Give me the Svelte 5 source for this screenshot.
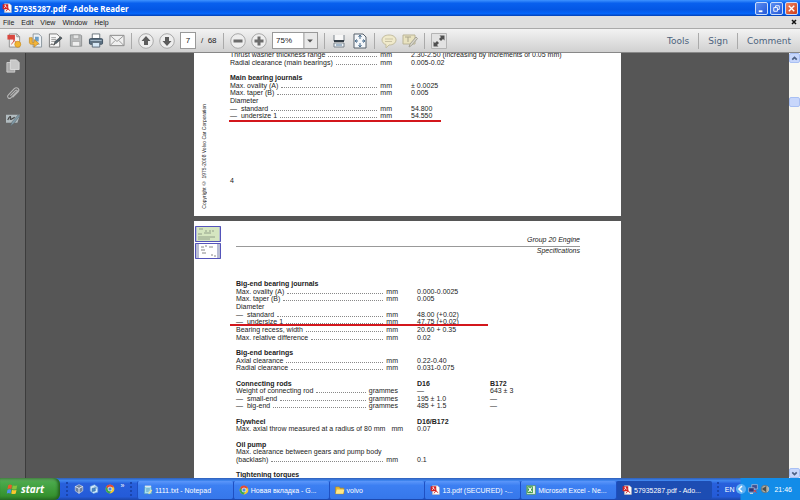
<script>
  const menus = ['File', 'Edit', 'View', 'Window', 'Help'];
  const panels = ['Tools', 'Sign', 'Comment'];

  let pageNumber = $state('7');
  let zoom = $state('75%');

  const mainJournals = [
    { label: 'Thrust washer thickness range', unit: 'mm', value: '2.30-2.50 (increasing by increments of 0.05 mm)' },
    { label: 'Radial clearance (main bearings)', unit: 'mm', value: '0.005-0.02' },
    {},
    { label: 'Main bearing journals', head: true },
    { label: 'Max. ovality (A)', unit: 'mm', value: '± 0.0025' },
    { label: 'Max. taper (B)', unit: 'mm', value: '0.005' },
    { label: 'Diameter' },
    { label: '—  standard', unit: 'mm', value: '54.800' },
    { label: '—  undersize 1', unit: 'mm', value: '54.550', mark: true },
  ];

  const engineSpecs = [
    { label: 'Big-end bearing journals', head: true },
    { label: 'Max. ovality (A)', unit: 'mm', value: '0.000-0.0025' },
    { label: 'Max. taper (B)', unit: 'mm', value: '0.005' },
    { label: 'Diameter' },
    { label: '—  standard', unit: 'mm', value: '48.00 (+0.02)' },
    { label: '—  undersize 1', unit: 'mm', value: '47.75 (+0.02)', mark: true },
    { label: 'Bearing recess, width', unit: 'mm', value: '20.60 + 0.35' },
    { label: 'Max. relative difference', unit: 'mm', value: '0.02' },
    {},
    { label: 'Big-end bearings', head: true },
    { label: 'Axial clearance', unit: 'mm', value: '0.22-0.40' },
    { label: 'Radial clearance', unit: 'mm', value: '0.031-0.075' },
    {},
    { label: 'Connecting rods', head: true, value: 'D16', other: 'B172' },
    { label: 'Weight of connecting rod', unit: 'grammes', value: '—', other: '643 ± 3' },
    { label: '—  small-end', unit: 'grammes', value: '195 ± 1.0', other: '—' },
    { label: '—  big-end', unit: 'grammes', value: '485 + 1.5', other: '—' },
    {},
    { label: 'Flywheel', head: true, value: 'D16/B172' },
    { label: 'Max. axial throw measured at a radius of 80 mm', unit: 'mm', value: '0.07' },
    {},
    { label: 'Oil pump', head: true },
    { label: 'Max. clearance between gears and pump body' },
    { label: '(backlash)', unit: 'mm', value: '0.1' },
    {},
    { label: 'Tightening torques', head: true },
  ];

  const tasks = [
    { icon: 'notepad', title: '1111.txt - Notepad' },
    { icon: 'chrome', title: 'Новая вкладка - G...' },
    { icon: 'folder', title: 'volvo' },
    { icon: 'pdf', title: '13.pdf (SECURED) -...' },
    { icon: 'excel', title: 'Microsoft Excel - Ne...' },
    { icon: 'pdf', title: '57935287.pdf - Ado...', active: true },
  ];
</script>

{#snippet icon(name)}
  <svg class="icon" viewBox="0 0 16 16" aria-hidden="true">
    {#if name === 'pdf'}
      <path d="M4 1h8l3 3v11H4z" fill="#fff" stroke="#b9b9b9" />
      <path d="M1 2h9v8H1z" fill="#d3201f" />
      <path d="M3 8c3-1 3-5 2-5s0 4 4 4" fill="none" stroke="#fff" stroke-width="1.2" />
      <path d="M6 13c3-1 4-5 3-6s0 4 4 5" fill="none" stroke="#d3201f" stroke-width="1.5" />
    {:else if name === 'create'}
      <path d="M3 1h8l3 3v11H3z" fill="#f4f4f4" stroke="#8f8f8f" />
      <path d="M11 1v3h3" fill="none" stroke="#8f8f8f" />
      <path d="M1 2h8v5H1z" fill="#d9473f" />
      <path d="M5 12c3-2 4-6 3-6s0 4 4 4" fill="none" stroke="#d9473f" />
      <circle cx="12" cy="12" r="3.2" fill="#f2b632" stroke="#c98a1c" stroke-width=".7" />
    {:else if name === 'convert'}
      <path d="M6 1h6l3 3v11H6z" fill="#edf1f5" stroke="#8a949d" />
      <path d="M8 4h4v5H8z" fill="#6e9fc7" />
      <path d="M9 12h4" stroke="#93a6b5" />
      <path d="M2 5v5c0 1 1 2 2 2h3v3l5-4-5-4v3H5V5z" fill="#f2b53c" stroke="#bf831c" stroke-width=".7" />
    {:else if name === 'sign'}
      <path d="M2 1h8l3 3v11H2z" fill="#f7f7f7" stroke="#777" />
      <path d="M4 5h5M4 7h5M4 9h4" stroke="#999" />
      <path d="M3 13c2-3 3 1 5-1" fill="none" stroke="#333" />
      <path d="m7 12 1-3 6-5 1.5 1.5-6 5.5z" fill="#53626c" stroke="#333" stroke-width=".6" />
    {:else if name === 'save'}
      <path d="M2 2h11l1 1v11H2z" fill="#b9bbbc" stroke="#8f9293" />
      <path d="M5 2h6v4H5z" fill="#e4e5e5" stroke="#999" stroke-width=".7" />
      <path d="M4 9h8v5H4z" fill="#efefef" stroke="#999" stroke-width=".7" />
    {:else if name === 'print'}
      <path d="M4 1h8v5H4z" fill="#fff" stroke="#68727a" />
      <rect x="1" y="6" width="14" height="6" rx="1" fill="#5e7385" stroke="#3f5060" />
      <path d="M2 8h12" stroke="#aabdcc" />
      <path d="M4 10h8v5H4z" fill="#d6e8f6" stroke="#596875" />
    {:else if name === 'mail'}
      <path d="M.5 2.500h15v11H.5z" fill="#f0f0f0" stroke="#858585" />
      <path d="m1 3 7 6 7-6M1 13l5-5M15 13l-5-5" fill="none" stroke="#949494" />
    {:else if name === 'up' || name === 'down' || name === 'minus' || name === 'plus'}
      <circle cx="8" cy="8" r="7.300" fill="#eee" stroke="#a8a8a8" />
      {#if name === 'up'}
        <path d="m8 3 4.500 5H10v4H6V8H3.500z" fill="#5c5c5c" />
      {:else if name === 'down'}
        <path d="m8 13 4.500-5H10V4H6v4H3.500z" fill="#5c5c5c" />
      {:else}
        <path d="M3.500 6.500h9v3h-9z" fill="#6c6c6c" />
        {#if name === 'plus'}<path d="M6.500 3.500h3v9h-3z" fill="#6c6c6c" />{/if}
      {/if}
    {:else if name === 'fitwidth'}
      <path d="M3 2v6h10V2" fill="#f8f8f8" stroke="#7a838b" />
      <path d="M3 8h10" stroke="#333d46" stroke-width="2" />
      <path d="M3 10h10v4H3z" fill="#eef4f9" stroke="#7a838b" />
      <path d="M5 12h6" stroke="#5b7c9b" />
    {:else if name === 'fitpage'}
      <path d="M2 1h9l3 3v11H2z" fill="#f4f7fa" stroke="#56606a" />
      <path d="M8 2v4M8 14v-4M3 8h3M13 8h-3M6.500 4 8 2l1.500 2M6.500 12 8 14l1.500-2M5 6.500 3 8l2 1.500M11 6.500 13 8l-2 1.500" fill="none" stroke="#496c8d" />
    {:else if name === 'comment'}
      <path d="M8 2c4 0 7 2 7 5s-3 5-7 5l-3 3v-3.500C2.500 11 1 9 1 7c0-3 3-5 7-5z" fill="#f0eacb" stroke="#c3bda0" />
      <path d="M4 6h8M4 8.500h7" stroke="#c9c2a4" />
    {:else if name === 'highlight'}
      <path d="M1 2h12v9H1z" fill="#e9e3c0" stroke="#bab497" />
      <path d="M3 4h6M6 4v5" stroke="#aaa58d" />
      <path d="m7 14 1-3 6-7 1.500 1.500-6 7z" fill="#d8d6ca" stroke="#a4a297" />
    {:else if name === 'fullscreen'}
      <path d="M.5.500h15v15H.5z" fill="#e2e2e2" stroke="#b4b4b4" />
      <path d="M8.500 2.500h5v5L12 6l-2 2-2-2 2-2zM7.500 13.500h-5v-5L4 10l2-2 2 2-2 2z" fill="#505050" />
    {:else if name === 'pages'}
      <path d="M1 4h9v11H1z" fill="#aaa" stroke="#d0d0d0" />
      <path d="M5 1h7l3 3v8H5z" fill="#c8c8c8" stroke="#ddd" />
    {:else if name === 'clip'}
      <path d="m5 11 6-6c1-1 2.500.5 1.500 1.500l-7 7c-2 2-5-1-3-3L9.500 3c3-3 7 1 4 4l-6 6" fill="none" stroke="#b6b6b6" stroke-width="1.300" />
    {:else if name === 'signatures'}
      <path d="M0 2h16l-3 9H0z" fill="#b2bcc0" />
      <path d="M2 8c2-5 4-5 3-2s3 0 5-1" fill="none" stroke="#444" stroke-width="1.300" />
      <path d="m5 15 2-5 7-8 2 1-7 9z" fill="#7f98a5" stroke="#5b6468" stroke-width=".6" />
    {:else if name === 'flag'}
      <path d="M3 3c2-2 3-1 5 0L7 8C5 7 4 7 2 8z" fill="#ec5a2c" />
      <path d="M9 3c2 1 4 1 6 0l-1 5c-2 1-4 1-6 0z" fill="#86c43b" />
      <path d="M2 9c2-1 3-1 5 0l-1 5c-2-1-3-1-5 0z" fill="#4f90ec" />
      <path d="M8 9c2 1 4 1 6 0l-1 5c-2 1-4 1-6 0z" fill="#f9c72f" />
    {:else if name === 'box'}
      <path d="m8 1 6 3v7l-6 4-6-4V4z" fill="#6d7f9b" stroke="#d7dfec" />
      <path d="m2 4 6 3 6-3M8 7v8" fill="none" stroke="#e8edf5" stroke-width="1.500" />
    {:else if name === 'desktop'}
      <path d="M2 4 9 1l5 4v8l-7 2-5-4z" fill="#d5ebfb" stroke="#6ca8df" />
      <path d="m5 7 5-1v5l-5 1zM9 4l4 3" fill="#4d89c6" stroke="#2c6ba9" />
    {:else if name === 'chrome'}
      <circle cx="8" cy="8" r="7" fill="#f6c72f" />
      <path d="M2 4.500A7 7 0 0 1 14.500 5H8a3 3 0 0 0-3 4z" fill="#df4a3a" />
      <path d="M2 4.500A7 7 0 0 0 7.500 15l3-5a3 3 0 0 1-5-1z" fill="#39a852" />
      <circle cx="8" cy="8" r="3.200" fill="#4a87e8" stroke="#fff" />
    {:else if name === 'notepad'}
      <path d="M3 2h10l1 12H2z" fill="#a8e0f2" stroke="#4c99b9" />
      <path d="M3 2h10" stroke="#eee" stroke-width="2" />
      <path d="M5 6h6M5 8h6M5 10h4" stroke="#4e8fb0" />
      <path d="m9 14 5-6" stroke="#e6e1a2" stroke-width="2" />
    {:else if name === 'folder'}
      <path d="M1 3h6l1 2h6v9H1z" fill="#e7b935" stroke="#b78a1b" />
      <path d="M3 7h12l-2 7H1z" fill="#ffe787" />
    {:else if name === 'excel'}
      <path d="M1 1h14v14H1z" fill="#e9f4e5" stroke="#3f8b43" />
      <path d="M2 2h9v11H2z" fill="#3b9847" />
      <path d="m4 4 5 7M9 4l-5 7" stroke="#fff" stroke-width="2" />
    {:else if name === 'network'}
      <path d="M6 1h9v7H6z" fill="#3d4f91" stroke="#c4cbe0" />
      <path d="M1 6h9v7H1z" fill="#2c3a79" stroke="#c4cbe0" />
      <path d="M3 15h5" stroke="#ddd" stroke-width="1.500" />
      <path d="m9 9 5 5M14 9l-5 5" stroke="#df3c36" stroke-width="1.500" />
    {:else if name === 'volume'}
      <circle cx="8" cy="8" r="6" fill="#aeb0a8" stroke="#5d5f5b" />
      <path d="M4 6h2l4-3v10l-4-3H4z" fill="#4b4d49" />
      <path d="M12 4c3 3 2 7-1 9" fill="none" stroke="#eee" />
    {/if}
  </svg>
{/snippet}

{#snippet tool(name, title)}
  <button type="button" class="tool" aria-label={title}>{@render icon(name)}</button>
{/snippet}

{#snippet specs(rows)}
  {#each rows as row}
    <div class="row" class:head={row.head}>
      <div class="entry">
        <span>{row.label ?? ''}</span>
        {#if row.unit}
          <i class="leader"></i>
          <span>{row.unit}</span>
        {/if}
      </div>
      <span>{row.value ?? ''}</span>
      <span>{row.other ?? ''}</span>
      {#if row.mark}<i class="mark"></i>{/if}
    </div>
  {/each}
{/snippet}

<div class="window">
  <header class="titlebar">
    {@render icon('pdf')}
    <h1>57935287.pdf - Adobe Reader</h1>
    <button type="button" class="caption" aria-label="Minimize">
      <svg viewBox="0 0 12 12"><path d="M3 9h4" stroke="#fff" stroke-width="2" /></svg>
    </button>
    <button type="button" class="caption" aria-label="Restore">
      <svg viewBox="0 0 12 12"><path d="M5 5V3h4v4H7M3 5h4v4H3z" fill="none" stroke="#fff" /></svg>
    </button>
    <button type="button" class="caption close" aria-label="Close">
      <svg viewBox="0 0 12 12"><path d="m3 3 6 6M9 3 3 9" stroke="#fff" stroke-width="1.500" /></svg>
    </button>
  </header>

  <nav class="menubar">
    {#each menus as menu}
      <button type="button">{menu}</button>
    {/each}
    <button type="button" class="close-doc" aria-label="Close document">
      <svg viewBox="0 0 6 6"><path d="m1 1 4 4M5 1 1 5" stroke="#111" stroke-width="1.500" /></svg>
    </button>
  </nav>

  <div class="toolbar">
    <div class="group files">
      {@render tool('create', 'Create PDF')}
      {@render tool('convert', 'Convert file')}
      {@render tool('sign', 'Sign document')}
      {@render tool('save', 'Save')}
      {@render tool('print', 'Print')}
      {@render tool('mail', 'Send by email')}
    </div>
    <i class="sep"></i>
    <div class="group">
      {@render tool('up', 'Previous page')}
      {@render tool('down', 'Next page')}
      <input class="page-number" aria-label="Page number" bind:value={pageNumber} />
      <span class="page-count">/&nbsp; 68</span>
    </div>
    <i class="sep"></i>
    <div class="group">
      {@render tool('minus', 'Zoom out')}
      {@render tool('plus', 'Zoom in')}
      <div class="zoom">
        <select aria-label="Zoom" bind:value={zoom}>
          <option>75%</option>
          <option>100%</option>
        </select>
        <svg viewBox="0 0 14 16" aria-hidden="true"><path d="M.5 0v16" stroke="#999" /><path d="M4 7h6l-3 3z" fill="#555" /></svg>
      </div>
    </div>
    <i class="sep"></i>
    <div class="group">
      {@render tool('fitwidth', 'Fit width')}
      {@render tool('fitpage', 'Fit page')}
    </div>
    <i class="sep"></i>
    <div class="group">
      {@render tool('comment', 'Add note')}
      {@render tool('highlight', 'Highlight text')}
    </div>
    <i class="sep"></i>
    {@render tool('fullscreen', 'Read mode')}
    <div class="panels">
      {#each panels as panel}
        <button type="button">{panel}</button>
      {/each}
    </div>
  </div>

  <div class="workspace">
    <aside class="rail">
      {@render tool('pages', 'Page thumbnails')}
      {@render tool('clip', 'Attachments')}
      {@render tool('signatures', 'Signatures')}
    </aside>

    <main class="canvas">
      <section class="sheet first">
        <div class="margin">
          <span class="copyright">Copyright © 1975-2008 Volvo Car Corporation</span>
        </div>
        <div class="content">
          <div class="specs">{@render specs(mainJournals)}</div>
          <p class="folio">4</p>
        </div>
      </section>

      <section class="sheet second">
        <div class="margin">
          <svg class="thumb" viewBox="0 0 26 16" aria-hidden="true">
            <path d="M0 0h26v16H0z" fill="#d5e6c0" />
            <path d="M4 3h4M10 5h2M14 5h2M17 5h2M9 7h7M3 8h4M3 11h17M3 13h12" stroke="#92a08a" />
            <path d="M0 0h2v16H0zM24 0h2v16h-2z" fill="#b4bdd2" />
            <path d="M.5.500h25v15H.5z" fill="none" stroke="#5454ba" />
          </svg>
          <svg class="thumb" viewBox="0 0 26 16" aria-hidden="true">
            <path d="M0 0h26v16H0z" fill="#fff" />
            <path d="M0 0h4v16H0zM22 0h4v16h-4z" fill="#b9bdd4" />
            <path d="M6 4h3M10 3h2M14 4h4M6 7h4M7 10h4M16 12h2M19 13h2" stroke="#888" />
            <path d="M.5.500h25v15H.5z" fill="none" stroke="#5454ba" />
          </svg>
        </div>
        <div class="content">
          <header class="chapter">
            <h2>Group 20 Engine</h2>
            <p>Specifications</p>
          </header>
          <div class="specs">{@render specs(engineSpecs)}</div>
        </div>
      </section>
    </main>

    <div class="scrollbar">
      <button type="button" aria-label="Scroll up"><svg viewBox="0 0 8 8"><path d="m2 5 2-2 2 2" /></svg></button>
      <i class="thumb-grip"></i>
      <button type="button" aria-label="Scroll down"><svg viewBox="0 0 8 8"><path d="m2 3 2 2 2-2" /></svg></button>
    </div>
  </div>

  <footer class="taskbar">
    <button type="button" class="start">{@render icon('flag')}<span>start</span></button>
    <div class="quick">
      <i class="grip"></i>
      {@render icon('box')}
      {@render icon('desktop')}
      {@render icon('chrome')}
      <span class="more">»</span>
      <i class="grip"></i>
    </div>
    <div class="tasks">
      {#each tasks as task}
        <button type="button" class="task" class:active={task.active}>
          {@render icon(task.icon)}
          <span>{task.title}</span>
        </button>
      {/each}
    </div>
    <div class="lang">
      <i class="grip"></i>
      <span>EN</span>
    </div>
    <div class="tray">
      <button type="button" class="expand" aria-label="Show hidden icons">
        <svg viewBox="0 0 10 10"><circle cx="5" cy="5" r="5" fill="#5fb2f5" /><path d="M6 2 3 5l3 3" fill="none" stroke="#fff" stroke-width="1.500" /></svg>
      </button>
      {@render icon('network')}
      {@render icon('volume')}
      <time>21:46</time>
    </div>
  </footer>
</div>

<style>
  :global(body) {
    margin: 0;
  }

  .window {
    display: flex;
    flex-direction: column;
    height: 100vh;
    overflow: hidden;
    font-family: 'Liberation Sans', Arial, sans-serif;
    font-size: 7px;
    color: #222;
  }

  button,
  input,
  select {
    margin: 0;
    padding: 0;
    border: 0;
    background: none;
    font: inherit;
    color: inherit;
  }

  svg {
    display: block;
  }

  h1,
  h2,
  p {
    margin: 0;
    font-weight: inherit;
  }

  .icon {
    flex: none;
    width: 10px;
    height: 10px;
  }

  .titlebar {
    display: flex;
    align-items: center;
    gap: 2px;
    height: 16px;
    padding: 0 2px;
    background: linear-gradient(#3f93ff, #0960ee 20%, #0457e5 60%, #0566fa 85%, #0340b4);
  }

  .titlebar h1 {
    flex: 1;
    font-family: 'Noto Sans', sans-serif;
    font-size: 8px;
    font-weight: 700;
    color: #fff;
  }

  .caption {
    width: 13px;
    height: 13px;
    box-sizing: border-box;
    border: 1px solid #c9dcfa;
    border-radius: 2px;
    background: linear-gradient(135deg, #5c8ff2, #2458d8);
  }

  .caption.close {
    background: linear-gradient(135deg, #ec8463, #cf3e18);
  }

  .menubar {
    display: flex;
    align-items: center;
    gap: 7px;
    height: 12px;
    padding: 0 3px;
    background: #dfdfdf;
  }

  .close-doc {
    width: 6px;
    margin-left: auto;
  }

  .toolbar {
    display: flex;
    align-items: center;
    gap: 6px;
    height: 23px;
    padding: 0 0 0 6px;
    border-top: 1px solid #aaa;
    border-bottom: 1px solid #888;
    background: linear-gradient(#f3f3f3, #d0d0d0);
  }

  .group {
    display: flex;
    align-items: center;
    gap: 5px;
  }

  .files {
    width: 119px;
    gap: 0;
    justify-content: space-between;
  }

  .tool .icon {
    width: 16px;
    height: 16px;
  }

  .files .icon {
    height: 15px;
  }

  .sep {
    width: 1px;
    height: 16px;
    background: #aaa;
  }

  .page-number {
    width: 16px;
    height: 17px;
    box-sizing: border-box;
    border: 1px solid #999;
    background: #fff;
    font-size: 8px;
    text-align: center;
  }

  .page-count {
    width: 16px;
    font-size: 8px;
    white-space: nowrap;
  }

  .zoom {
    display: flex;
    width: 44px;
    height: 15px;
    border: 1px solid #999;
    background: #fff;
  }

  .zoom select {
    flex: 1;
    min-width: 0;
    padding-left: 3px;
    appearance: none;
    font-size: 8px;
  }

  .zoom svg {
    width: 14px;
    background: #e8e8e8;
    pointer-events: none;
  }

  .panels {
    display: flex;
    margin-left: auto;
    font-family: 'DejaVu Sans', Verdana, sans-serif;
    font-size: 9px;
    color: #4d637d;
  }

  .panels button {
    height: 16px;
    padding: 0 9px;
  }

  .panels button + button {
    border-left: 1px solid #aaa;
  }

  .workspace {
    flex: 1;
    display: flex;
    min-height: 0;
    background: #565656;
  }

  .rail {
    display: flex;
    flex-direction: column;
    align-items: center;
    gap: 13px;
    width: 25px;
    padding-top: 6px;
    border-right: 1px solid #3c3c3c;
    background: #666;
  }

  .rail .icon {
    width: 14px;
    height: 14px;
  }

  .canvas {
    flex: 1;
    display: flex;
    flex-direction: column;
    align-items: center;
    gap: 5px;
    overflow: hidden;
  }

  .sheet {
    flex: none;
    display: flex;
    width: 427px;
    box-sizing: border-box;
    background: #fff;
    line-height: 8px;
  }

  .sheet.first {
    height: 165px;
    margin-top: -2px;
  }

  .sheet.second {
    padding-right: 41px;
  }

  .margin {
    flex: none;
    display: flex;
    flex-direction: column;
    gap: 1px;
    box-sizing: border-box;
  }

  .first .margin {
    width: 36px;
    justify-content: flex-end;
    padding: 0 0 7px 6px;
  }

  .second .margin {
    width: 42px;
    padding: 5px 0 0 1px;
  }

  .copyright {
    writing-mode: vertical-rl;
    transform: rotate(180deg);
    align-self: flex-start;
    font-size: 5px;
    white-space: nowrap;
  }

  .thumb {
    width: 26px;
    height: 16px;
  }

  .content {
    flex: 1;
    min-width: 0;
  }

  .chapter {
    padding: 15px 0 25px;
    font-style: italic;
    text-align: right;
  }

  .chapter h2 {
    padding-bottom: 2px;
    border-bottom: 1px solid #999;
    font-size: 7px;
  }

  /* rows share the block height evenly, as the scanned lines do */
  .specs {
    display: grid;
    grid-auto-rows: 1fr;
  }

  .first .specs {
    height: 69px;
  }

  .second .specs {
    height: 199px;
  }

  .row {
    position: relative;
    display: grid;
    grid-template-columns: 162px 54px 1fr;
    gap: 19px;
    min-height: 0;
    white-space: nowrap;
  }

  .row.head {
    font-weight: 700;
  }

  .entry {
    display: flex;
    gap: 3px;
    white-space: pre;
  }

  .leader {
    flex: 1;
    height: 5px;
    border-bottom: 1px dotted #888;
  }

  .mark {
    position: absolute;
    left: -1px;
    bottom: -2px;
    width: 212px;
    height: 2px;
    background: #d3171c;
  }

  .second .mark {
    left: -6px;
    bottom: 0;
    width: 258px;
  }

  .folio {
    padding-top: 57px;
  }

  .scrollbar {
    display: flex;
    flex-direction: column;
    width: 11px;
    background: #f8f8f3;
  }

  .scrollbar button,
  .thumb-grip {
    height: 10px;
    box-sizing: border-box;
    border: 1px solid #a9c0f3;
    border-radius: 2px;
    background: #c8d7fb;
  }

  .scrollbar path {
    fill: none;
    stroke: #4d6185;
    stroke-width: 1.5;
  }

  .thumb-grip {
    margin: 34px 0 auto;
  }

  .taskbar {
    display: flex;
    align-items: stretch;
    height: 22px;
    background: linear-gradient(#2f5fb8, #3f86f0 12%, #2860dc 25%, #245bd8 85%, #1c46a8);
    color: #fff;
  }

  .start {
    display: flex;
    align-items: center;
    gap: 3px;
    width: 60px;
    padding-left: 6px;
    border-radius: 0 6px 6px 0;
    background: linear-gradient(#5c9e5b, #4aa94b 20%, #36922f 80%, #2a7326);
    box-shadow: inset -2px 0 3px #235f20;
    font-family: 'Open Sans', sans-serif;
    font-size: 10px;
    font-style: italic;
    font-weight: 700;
  }

  .start .icon {
    width: 12px;
    height: 12px;
  }

  .quick {
    display: flex;
    align-items: center;
    justify-content: space-between;
    width: 66px;
    padding: 0 5px 0 6px;
  }

  .more {
    align-self: flex-start;
    line-height: 16px;
  }

  .grip {
    height: 14px;
    border-left: 2px dotted #1a45ab;
  }

  .tasks {
    flex: 1;
    display: flex;
    padding: 3px 0 1px;
  }

  .task {
    flex: 1;
    display: flex;
    align-items: center;
    gap: 2px;
    min-width: 0;
    padding-left: 5px;
    border-left: 1px solid #1f50c2;
    border-radius: 2px;
    background: linear-gradient(#5c97fa, #3c7ff2 25%, #3677ea);
    white-space: nowrap;
  }

  .task.active {
    background: #1d4db3;
  }

  .lang {
    display: flex;
    align-items: center;
    gap: 6px;
    padding: 0 2px 0 5px;
  }

  .tray {
    display: flex;
    align-items: center;
    gap: 2px;
    padding-right: 8px;
    background: linear-gradient(90deg, transparent 4px, #128ce8 5px);
  }

  .expand {
    width: 10px;
  }

  .tray time {
    padding-left: 2px;
  }
</style>
